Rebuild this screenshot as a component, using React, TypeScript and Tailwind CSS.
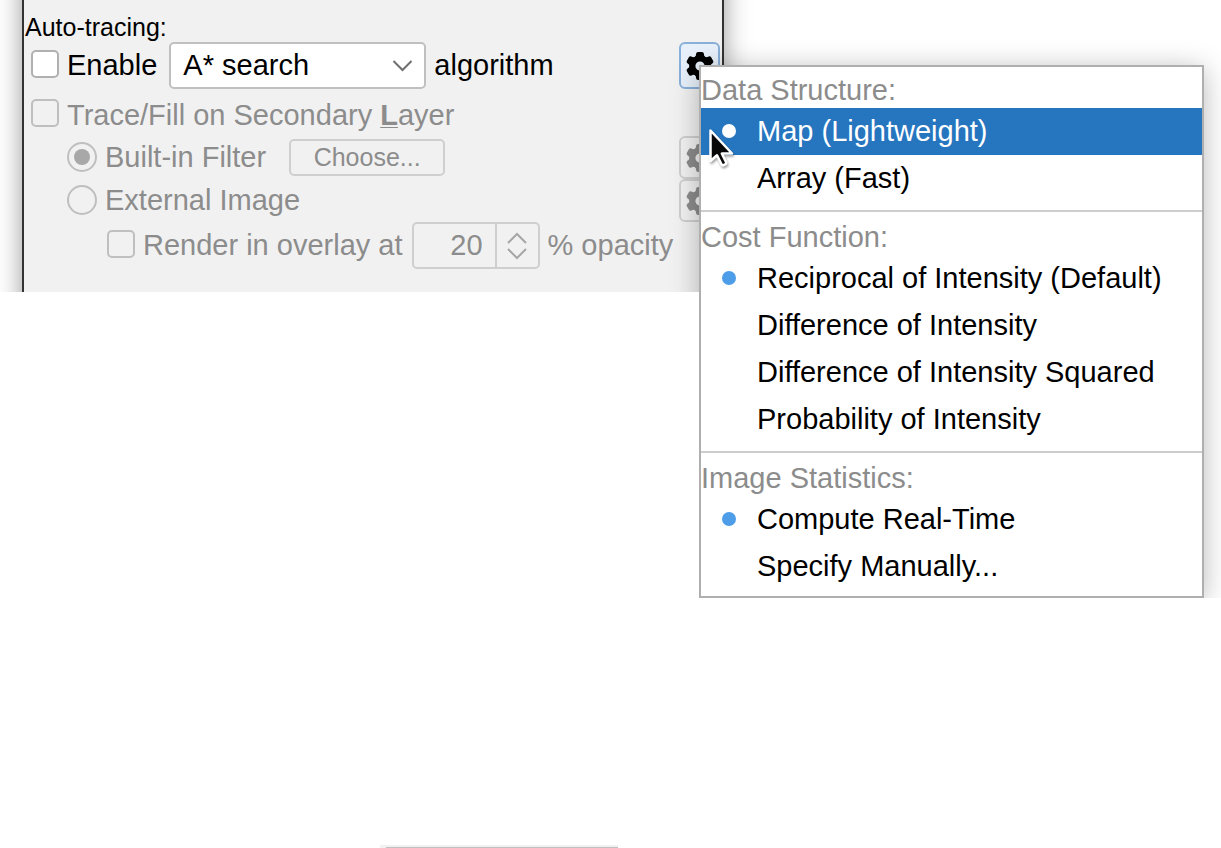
import React from "react";

const menuGroups = [
  { title: "Data Structure:", items: ["Map (Lightweight)", "Array (Fast)"], selected: 0, highlighted: 0 },
  {
    title: "Cost Function:",
    items: [
      "Reciprocal of Intensity (Default)",
      "Difference of Intensity",
      "Difference of Intensity Squared",
      "Probability of Intensity",
    ],
    selected: 0,
    highlighted: -1,
  },
  { title: "Image Statistics:", items: ["Compute Real-Time", "Specify Manually..."], selected: 0, highlighted: -1 },
];

const boxClass = "h-7 w-7 shrink-0 appearance-none rounded-[5px] border-2";

function Radio({ id, checked }: { id: string; checked: boolean }) {
  return (
    <span className="mb-[2px] grid h-[30px] w-[30px] shrink-0 place-items-center">
      <input
        id={id}
        type="radio"
        name="source"
        disabled
        defaultChecked={checked}
        className="peer col-start-1 row-start-1 h-[30px] w-[30px] appearance-none rounded-full border-2 border-[#bfbfbf]"
      />
      <span className="col-start-1 row-start-1 hidden h-4 w-4 rounded-full bg-[#a8a8a8] peer-checked:block" />
    </span>
  );
}

function Gear() {
  return (
    <svg className="h-7 w-7 shrink-0" viewBox="0 0 28 28" fill="currentColor">
      <circle cx="14" cy="14" r="7.600" fill="none" stroke="currentColor" strokeWidth="6" />
      {[0, 60, 120, 180, 240, 300].map((a) => (
        <path
          key={a}
          transform={`rotate(${a} 14 14)`}
          d="M12 0h4q1.700 0 1.900 1.700l.3 2 1.200 1.600L18 8h-8L8.600 5.300l1.200-1.600.3-2Q10.300 0 12 0z"
        />
      ))}
    </svg>
  );
}

function GearButton({ label, active }: { label: string; active?: boolean }) {
  return (
    <button
      type="button"
      aria-label={label}
      disabled={!active}
      className={
        active
          ? "ml-auto flex h-[47px] w-[41px] shrink-0 items-center justify-center rounded-[6px] border-2 border-[#89b0d9] bg-[#e8f1fb] text-black"
          : "ml-auto flex h-[43px] w-[41px] shrink-0 items-center justify-center rounded-[6px] border-2 border-[#cfcfcf] text-[#8c8c8c]"
      }
    >
      <Gear />
    </button>
  );
}

function TracingPanel() {
  return (
    <section className="overflow-hidden px-[22px]">
      <div className="-my-10 max-w-[702px] border-x-2 border-[#333] bg-[#f1f1f1] py-10 text-[#8c8c8c] shadow-[0_0_24px_rgba(0,0,0,0.4)]">
        <h2 className="h-[42px] pt-3 pl-px text-[25px] leading-[30px] text-black">Auto-tracing:</h2>
        <div className="flex h-[47px] items-center pr-[2px] pl-[7px] text-black">
          <input id="enable" type="checkbox" className={`${boxClass} mb-[3px] border-[#b0b0b0] bg-white`} />
          <label htmlFor="enable" className="ml-2">Enable</label>
          <span className="relative ml-3">
            <select
              aria-label="Search algorithm"
              className="h-[47px] w-[257px] appearance-none rounded-[5px] border-2 border-[#c0c0c0] bg-white pl-3"
            >
              <option>A* search</option>
            </select>
            <svg className="pointer-events-none absolute top-4 right-3 h-4 w-[22px]" viewBox="0 0 22 16" fill="none" stroke="#6e6e6e" strokeWidth="2">
              <path d="M1.500 3l9 9 9-9" />
            </svg>
          </span>
          <span className="ml-2">algorithm</span>
          <GearButton label="Auto-tracing options" active />
        </div>
        <div className="flex h-[47px] items-center pl-[7px]">
          <input id="secondary" type="checkbox" disabled className={`${boxClass} border-[#bfbfbf]`} />
          <label htmlFor="secondary" className="ml-2 pt-[6px]">
            Trace/Fill on Secondary <b className="underline decoration-1 underline-offset-2">L</b>ayer
          </label>
        </div>
        <div className="flex h-[43px] items-center pr-[2px] pl-[43px]">
          <Radio id="builtin" checked />
          <label htmlFor="builtin" className="ml-2">Built-in Filter</label>
          <button type="button" disabled className="ml-[23px] h-[37px] w-[156px] rounded-[5px] border-2 border-[#cfcfcf] text-[25px] leading-[33px]">
            Choose...
          </button>
          <GearButton label="Filter options" />
        </div>
        <div className="flex h-[43px] items-center pr-[2px] pl-[43px]">
          <Radio id="external" checked={false} />
          <label htmlFor="external" className="ml-2">External Image</label>
          <GearButton label="Image options" />
        </div>
        <div className="mb-[23px] flex h-[47px] items-center pl-[83px]">
          <input id="overlay" type="checkbox" disabled className={`${boxClass} mb-[3px] border-[#bfbfbf]`} />
          <label htmlFor="overlay" className="ml-2">Render in overlay at</label>
          <span className="ml-[9px] flex h-[47px] w-[128px] rounded-[5px] border-2 border-[#cfcfcf]">
            <input aria-label="Opacity" type="text" defaultValue="20" disabled className="w-[81px] pr-3 text-right" />
            <span className="flex flex-1 flex-col justify-center border-l-2 border-[#cfcfcf]">
              <button type="button" aria-label="Increase" disabled className="flex h-4 items-center justify-center">
                <svg width="20" height="12" viewBox="0 0 20 12" fill="none" stroke="#a6a6a6" strokeWidth="2">
                  <path d="M1 11l9-9 9 9" />
                </svg>
              </button>
              <button type="button" aria-label="Decrease" disabled className="flex h-4 items-center justify-center">
                <svg width="20" height="12" viewBox="0 0 20 12" fill="none" stroke="#a6a6a6" strokeWidth="2">
                  <path d="M1 1l9 9 9-9" />
                </svg>
              </button>
            </span>
          </span>
          <span className="ml-2">% opacity</span>
        </div>
      </div>
    </section>
  );
}

function OptionsMenu() {
  return (
    <div
      role="menu"
      className="absolute top-[65px] left-[699px] w-[505px] border-2 border-[#afafaf] bg-white pb-[6px] shadow-[0_4px_26px_rgba(0,0,0,0.28)] [clip-path:polygon(-32px_-32px,calc(100%+32px)_-32px,calc(100%+32px)_100%,0_100%,0_227px,-32px_227px)]"
    >
      {menuGroups.map((group, g) => (
        <div key={group.title} role="group" aria-label={group.title}>
          {g > 0 && <hr className="mt-2 mb-[2px] border-t-2 border-[#cdcdcd]" />}
          <div className="h-[41px] pt-[6px] leading-[35px] text-[#8c8c8c]">{group.title}</div>
          {group.items.map((item, i) => {
            const lit = i === group.highlighted;
            return (
              <button
                key={item}
                type="button"
                role="menuitemradio"
                aria-checked={i === group.selected}
                className={`flex h-[47px] w-full items-center pl-[21px] text-left ${lit ? "bg-[#2675bf] text-white" : "text-black"}`}
              >
                <span
                  className={`mr-[21px] mb-[2px] h-[14px] w-[14px] shrink-0 rounded-full ${
                    i !== group.selected ? "" : lit ? "bg-white" : "bg-[#4d9de8]"
                  }`}
                />
                {item}
              </button>
            );
          })}
        </div>
      ))}
    </div>
  );
}

export default function App() {
  return (
    <main className="relative flex min-h-screen flex-col bg-white font-['Liberation_Sans',Arial,sans-serif] text-[29px] leading-[33px]">
      <TracingPanel />
      <OptionsMenu />
      <svg className="pointer-events-none absolute top-[125px] left-[706px] drop-shadow-[1px_2px_1px_rgba(0,0,0,0.35)]" width="34" height="46" viewBox="0 0 34 46">
        <path
          d="M4.500 5.500V36l6.500-5.700 4.600 9.200q.7 1.200 2 .6l1.800-.9q1.200-.7.7-1.900L15.800 28.500H26z"
          fill="#080808"
          stroke="#fff"
          strokeWidth="2.500"
          strokeLinejoin="round"
        />
      </svg>
      <div className="mt-auto ml-[380px] flex h-[3px] w-[238px] items-end bg-[#f1f1f1] pl-[6px]">
        <div className="h-px w-full bg-[#c0c0c0]" />
      </div>
    </main>
  );
}
